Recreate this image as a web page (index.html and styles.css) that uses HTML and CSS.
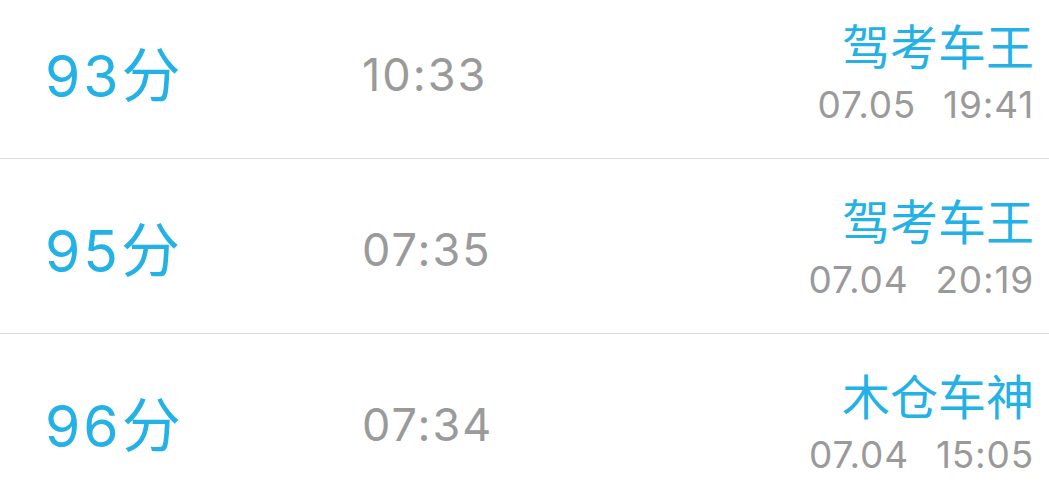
FILE: index.html
```html
<!DOCTYPE html>
<html lang="zh-CN">
<head>
<meta charset="utf-8">
<link rel="stylesheet" href="styles.css">
</head>
<body>
<ul class="list">
  <li class="row">
    <div class="score">93<span class="unit">分</span></div>
    <div class="time">10:33</div>
    <div class="meta">
      <div class="name">驾考车王</div>
      <div class="date"><span>07.05</span><span>19:41</span></div>
    </div>
  </li>
  <li class="row">
    <div class="score">95<span class="unit">分</span></div>
    <div class="time">07:35</div>
    <div class="meta">
      <div class="name">驾考车王</div>
      <div class="date"><span>07.04</span><span>20:19</span></div>
    </div>
  </li>
  <li class="row">
    <div class="score">96<span class="unit">分</span></div>
    <div class="time">07:34</div>
    <div class="meta">
      <div class="name">木仓车神</div>
      <div class="date"><span>07.04</span><span>15:05</span></div>
    </div>
  </li>
</ul>
</body>
</html>
```
FILE: styles.css
```css
html, body {
  margin: 0;
  padding: 0;
  background: #ffffff;
  overflow: hidden;
}
body {
  font-family: Inter, "Noto Sans CJK SC", sans-serif;
}
.list {
  list-style: none;
  margin: -16px 0 0 0;
  padding: 0;
}
.row {
  display: grid;
  grid-template-columns: 317px 1fr auto;
  align-items: center;
  height: 174px;
  padding: 0 15px 0 45px;
  border-bottom: 1px solid #dcdcdc;
}
.score {
  color: #23b1e6;
  font-size: 57px;
  letter-spacing: 3px;
  line-height: 1;
  padding-top: 4px;
}
.unit {
  font-family: "Noto Sans CJK SC", sans-serif;
  font-size: 59px;
  letter-spacing: 0;
}
.time {
  color: #9a9a9a;
  font-size: 45px;
  letter-spacing: 2px;
  line-height: 1;
  padding-top: 6px;
}
.meta {
  display: flex;
  flex-direction: column;
  align-items: flex-end;
  gap: 18px;
}
.name {
  color: #23b1e6;
  font-family: "Noto Sans CJK SC", sans-serif;
  font-size: 48px;
  line-height: 1;
}
.date {
  display: flex;
  gap: 27px;
  color: #9a9a9a;
  font-size: 37px;
  letter-spacing: 0.8px;
  line-height: 1;
}
```
